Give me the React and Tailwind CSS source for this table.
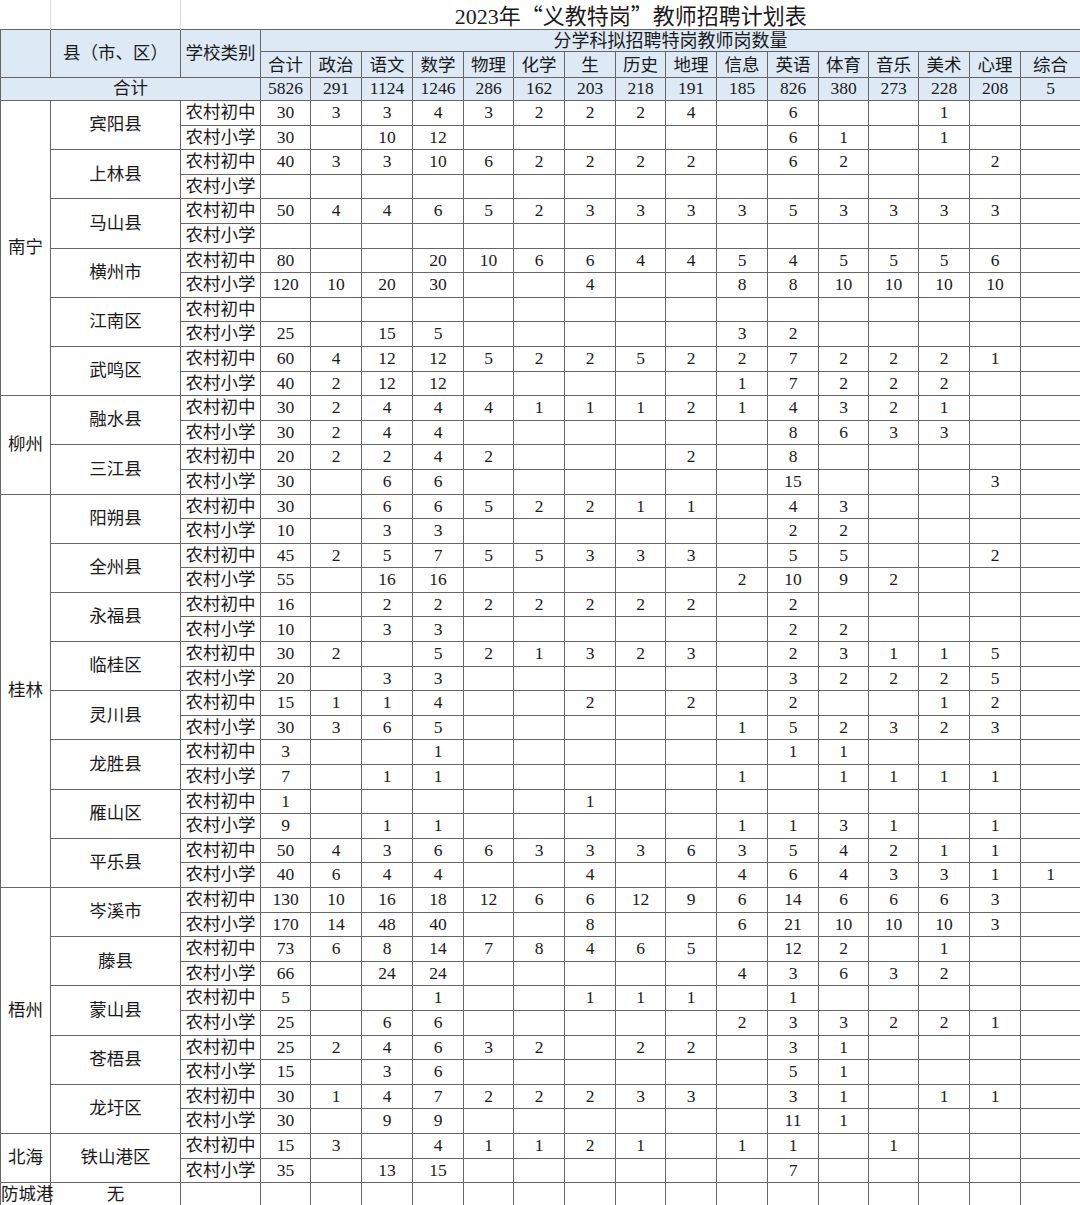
import React from "react";

const SUBJECTS = ["合计","政治","语文","数学","物理","化学","生","历史","地理","信息","英语","体育","音乐","美术","心理","综合"];
const TOTALS = "5826 291 1124 1246 286 162 203 218 191 185 826 380 273 228 208 5";
const WIDTHS = [50,130,80,50,51,51,51,50,51,51,50,51,51,51,50,50,51,51,60];

const DATA = [
  { city: "南宁", counties: [
    ["宾阳县", "30 3 3 4 3 2 2 2 4 - 6 - - 1", "30 - 10 12 - - - - - - 6 1 - 1"],
    ["上林县", "40 3 3 10 6 2 2 2 2 - 6 2 - - 2", ""],
    ["马山县", "50 4 4 6 5 2 3 3 3 3 5 3 3 3 3", ""],
    ["横州市", "80 - - 20 10 6 6 4 4 5 4 5 5 5 6", "120 10 20 30 - - 4 - - 8 8 10 10 10 10"],
    ["江南区", "", "25 - 15 5 - - - - - 3 2"],
    ["武鸣区", "60 4 12 12 5 2 2 5 2 2 7 2 2 2 1", "40 2 12 12 - - - - - 1 7 2 2 2"],
  ]},
  { city: "柳州", counties: [
    ["融水县", "30 2 4 4 4 1 1 1 2 1 4 3 2 1", "30 2 4 4 - - - - - - 8 6 3 3"],
    ["三江县", "20 2 2 4 2 - - - 2 - 8", "30 - 6 6 - - - - - - 15 - - - 3"],
  ]},
  { city: "桂林", counties: [
    ["阳朔县", "30 - 6 6 5 2 2 1 1 - 4 3", "10 - 3 3 - - - - - - 2 2"],
    ["全州县", "45 2 5 7 5 5 3 3 3 - 5 5 - - 2", "55 - 16 16 - - - - - 2 10 9 2"],
    ["永福县", "16 - 2 2 2 2 2 2 2 - 2", "10 - 3 3 - - - - - - 2 2"],
    ["临桂区", "30 2 - 5 2 1 3 2 3 - 2 3 1 1 5", "20 - 3 3 - - - - - - 3 2 2 2 5"],
    ["灵川县", "15 1 1 4 - - 2 - 2 - 2 - - 1 2", "30 3 6 5 - - - - - 1 5 2 3 2 3"],
    ["龙胜县", "3 - - 1 - - - - - - 1 1", "7 - 1 1 - - - - - 1 - 1 1 1 1"],
    ["雁山区", "1 - - - - - 1", "9 - 1 1 - - - - - 1 1 3 1 - 1"],
    ["平乐县", "50 4 3 6 6 3 3 3 6 3 5 4 2 1 1", "40 6 4 4 - - 4 - - 4 6 4 3 3 1 1"],
  ]},
  { city: "梧州", counties: [
    ["岑溪市", "130 10 16 18 12 6 6 12 9 6 14 6 6 6 3", "170 14 48 40 - - 8 - - 6 21 10 10 10 3"],
    ["藤县", "73 6 8 14 7 8 4 6 5 - 12 2 - 1", "66 - 24 24 - - - - - 4 3 6 3 2"],
    ["蒙山县", "5 - - 1 - - 1 1 1 - 1", "25 - 6 6 - - - - - 2 3 3 2 2 1"],
    ["苍梧县", "25 2 4 6 3 2 - 2 2 - 3 1", "15 - 3 6 - - - - - - 5 1"],
    ["龙圩区", "30 1 4 7 2 2 2 3 3 - 3 1 - 1 1", "30 - 9 9 - - - - - - 11 1"],
  ]},
  { city: "北海", counties: [
    ["铁山港区", "15 3 - 4 1 1 2 1 - 1 1 - 1", "35 - 13 15 - - - - - - 7"],
  ]},
];

function parse(s) {
  const arr = s.trim() ? s.trim().split(/\s+/) : [];
  const out = [];
  for (let i = 0; i < 16; i++) {
    const v = arr[i];
    out.push(v && v !== "-" ? v : "");
  }
  return out;
}

const cell = "border border-[#666] p-0 text-center align-middle whitespace-nowrap";
const head = cell + " bg-[#dde9f5]";

function Row({ first, cityName, citySpan, county, type, values }) {
  return (
    <tr className="h-[24.6px]">
      {citySpan > 0 ? (
        <td rowSpan={citySpan} className={cell}>{cityName}</td>
      ) : null}
      {first ? (
        <td rowSpan={2} className={cell}>{county}</td>
      ) : null}
      <td className={cell}>{type}</td>
      {values.map((v, i) => (
        <td key={i} className={cell}>{v}</td>
      ))}
    </tr>
  );
}

export default function App() {
  const rows = [];
  DATA.forEach((g) => {
    const span = g.counties.length * 2;
    g.counties.forEach((c, ci) => {
      rows.push(
        <Row key={c[0] + "a"} first={true} cityName={g.city} citySpan={ci === 0 ? span : 0} county={c[0]} type="农村初中" values={parse(c[1])} />
      );
      rows.push(
        <Row key={c[0] + "b"} first={false} citySpan={0} county={c[0]} type="农村小学" values={parse(c[2])} />
      );
    });
  });

  return (
    <div className="w-[1080px] h-[1205px] bg-white overflow-hidden">
      <table className="table-fixed border-collapse w-[1080px] text-[17.5px] leading-none text-[#1a1a1a] font-['Liberation_Serif','Noto_Sans_CJK_SC',serif]">
        <colgroup>
          {WIDTHS.map((w, i) => (
            <col key={i} style={{ width: w }} />
          ))}
        </colgroup>
        <tbody>
          <tr className="h-[26.8px]">
            <td className="p-0 border-r border-[#d9d9d9]"></td>
            <td className="p-0 border-r border-[#d9d9d9]"></td>
            <td colSpan={17} className="p-0 pt-[2px] text-center align-middle text-[22px] leading-[24px] whitespace-nowrap">
              2023年<span className="font-['Noto_Sans_CJK_SC',sans-serif]">“</span>义教特岗<span className="font-['Noto_Sans_CJK_SC',sans-serif]">”</span>教师招聘计划表
            </td>
          </tr>
          <tr className="h-[22px]">
            <td rowSpan={2} className={head}></td>
            <td rowSpan={2} className={head}>县（市、区）</td>
            <td rowSpan={2} className={head}>学校类别</td>
            <td colSpan={16} className={head + " text-[18px]"}>分学科拟招聘特岗教师岗数量</td>
          </tr>
          <tr className="h-[26px]">
            {SUBJECTS.map((s) => (
              <td key={s} className={head + " pt-[2px]"}>{s}</td>
            ))}
          </tr>
          <tr className="h-[23px]">
            <td colSpan={3} className={head}>合计</td>
            {TOTALS.split(" ").map((t, i) => (
              <td key={i} className={head}>{t}</td>
            ))}
          </tr>
          {rows}
          <tr className="h-[24px]">
            <td className={cell + " text-left overflow-visible"}>防城港</td>
            <td className={cell}>无</td>
            <td className={cell}></td>
            {Array.from({ length: 16 }).map((_, i) => (
              <td key={i} className={cell}></td>
            ))}
          </tr>
        </tbody>
      </table>
    </div>
  );
}
